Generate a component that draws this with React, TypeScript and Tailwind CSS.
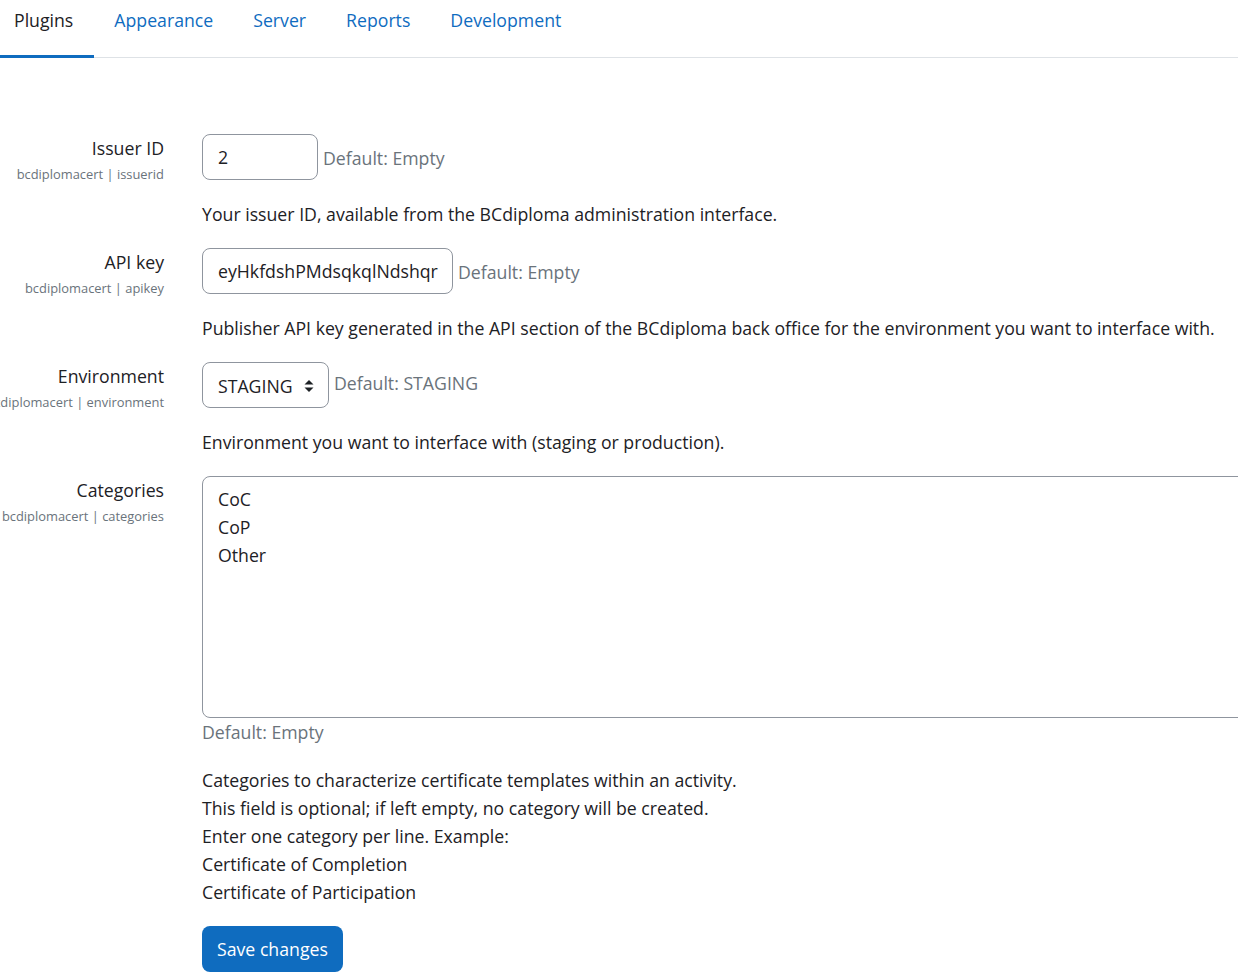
import React from 'react';

const tabs = ['Plugins', 'Appearance', 'Server', 'Reports', 'Development'];

const Label: React.FC<{ title: string; name: string }> = ({ title, name }) => (
  <div className="w-[164px] shrink-0 flex flex-col items-end">
    <div className="text-[17.7px] leading-[28px] text-[#1d2125] whitespace-nowrap">{title}</div>
    <div className="text-[12.9px] leading-[24px] text-[#6a737b] whitespace-nowrap">{name}</div>
  </div>
);

const Desc: React.FC<{ children: React.ReactNode }> = ({ children }) => (
  <div className="mt-5 text-[17.7px] leading-[28px] text-[#1d2125] whitespace-nowrap">{children}</div>
);

const App: React.FC = () => {
  return (
    <div className="w-[1238px] h-[976px] overflow-hidden bg-white" style={{ fontFamily: '"Open Sans", "Noto Sans", sans-serif' }}>
      <div className="flex border-b border-[#dee2e6] h-[58px]">
        {tabs.map((t, i) => (
          <div
            key={t}
            className={
              i === 0
                ? 'pl-[14px] pr-[21px] pt-[6px] text-[17.7px] leading-[28px] text-[#1d2125] border-b-[3px] border-[#0f6cbf] -mb-px'
                : 'px-5 pt-[6px] text-[17.7px] leading-[28px] text-[#0f6cbf]'
            }
          >
            {t}
          </div>
        ))}
      </div>

      <div className="pt-[76px] flex flex-col gap-5">
        <div className="flex gap-[38px]">
          <Label title="Issuer ID" name="bcdiplomacert | issuerid" />
          <div>
            <div className="flex items-start">
              <div className="w-[116px] h-[46px] border border-[#8f959e] rounded-lg px-[15px] flex items-center text-[17.7px] text-[#1d2125]">2</div>
              <div className="ml-[5px] mt-[10px] text-[17.7px] leading-[28px] text-[#6a737b]">Default: Empty</div>
            </div>
            <Desc>Your issuer ID, available from the BCdiploma administration interface.</Desc>
          </div>
        </div>

        <div className="flex gap-[38px]">
          <Label title="API key" name="bcdiplomacert | apikey" />
          <div>
            <div className="flex items-start">
              <div className="w-[251px] h-[46px] border border-[#8f959e] rounded-lg pl-[15px] flex items-center overflow-hidden whitespace-nowrap text-[17.7px] text-[#1d2125]">eyHkfdshPMdsqkqlNdshqr</div>
              <div className="ml-[5px] mt-[10px] text-[17.7px] leading-[28px] text-[#6a737b]">Default: Empty</div>
            </div>
            <Desc>Publisher API key generated in the API section of the BCdiploma back office for the environment you want to interface with.</Desc>
          </div>
        </div>

        <div className="flex gap-[38px]">
          <Label title="Environment" name="bcdiplomacert | environment" />
          <div>
            <div className="flex items-start">
              <div className="w-[127px] h-[46px] border border-[#8f959e] rounded-lg pl-[15px] pr-[14px] flex items-center justify-between text-[17.7px] text-[#1d2125]">
                <span className="pt-[2px]">STAGING</span>
                <svg width="10" height="14" viewBox="0 0 10 14" className="mt-[1px]">
                  <path d="M5 1 L9.5 5.5 H0.5 Z" fill="#1d2125" />
                  <path d="M5 13 L9.5 8.5 H0.5 Z" fill="#1d2125" />
                </svg>
              </div>
              <div className="ml-[5px] mt-[7px] text-[17.7px] leading-[28px] text-[#6a737b]">Default: STAGING</div>
            </div>
            <Desc>Environment you want to interface with (staging or production).</Desc>
          </div>
        </div>

        <div className="flex gap-[38px]">
          <Label title="Categories" name="bcdiplomacert | categories" />
          <div>
            <div className="w-[1100px] h-[242px] border border-[#8f959e] rounded-lg px-[15px] pt-[8px] text-[17.7px] leading-[28px] text-[#1d2125]">
              <div>CoC</div>
              <div>CoP</div>
              <div>Other</div>
            </div>
            <div className="text-[17.7px] leading-[28px] text-[#6a737b]">Default: Empty</div>
            <div className="mt-5 text-[17.7px] leading-[28px] text-[#1d2125] whitespace-nowrap">
              <div>Categories to characterize certificate templates within an activity.</div>
              <div>This field is optional; if left empty, no category will be created.</div>
              <div>Enter one category per line. Example:</div>
              <div>Certificate of Completion</div>
              <div>Certificate of Participation</div>
            </div>
            <button className="mt-5 h-[46px] px-[15px] rounded-lg bg-[#0f6cbf] text-white text-[17.7px] leading-[28px]">Save changes</button>
          </div>
        </div>
      </div>
    </div>
  );
};

export default App;
